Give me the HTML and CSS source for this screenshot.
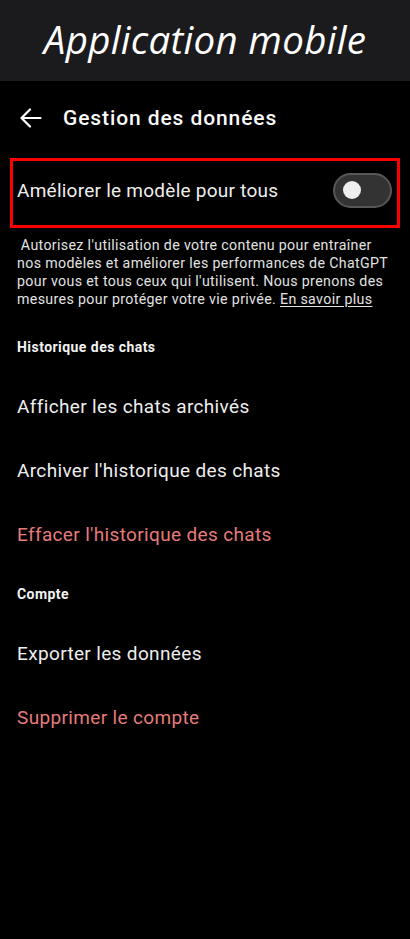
FILE: index.html
```html
<!DOCTYPE html>
<html lang="fr">
<head>
<meta charset="utf-8">
<link rel="stylesheet" href="styles.css">
</head>
<body>
<header class="banner"><h1 class="banner-title">Application mobile</h1></header>
<main class="screen">
  <div class="appbar">
    <svg class="back" width="22" height="20" viewBox="0 0 22 20" fill="none" stroke="#fff" stroke-width="2.2" stroke-linecap="round" stroke-linejoin="round"><path d="M20.5 10H2M10 1.5L1.5 10L10 18.5"/></svg>
    <h2 class="appbar-title">Gestion des données</h2>
  </div>
  <div class="highlight">
    <span class="toggle-label">Améliorer le modèle pour tous</span>
    <span class="switch"><span class="knob"></span></span>
  </div>
  <p class="desc">&nbsp;Autorisez l'utilisation de votre contenu pour entraîner nos modèles et améliorer les performances de ChatGPT pour vous et tous ceux qui l'utilisent. Nous prenons des mesures pour protéger votre vie privée. <u>En savoir plus</u></p>
  <h3 class="section">Historique des chats</h3>
  <div class="item">Afficher les chats archivés</div>
  <div class="item">Archiver l'historique des chats</div>
  <div class="item danger">Effacer l'historique des chats</div>
  <h3 class="section">Compte</h3>
  <div class="item">Exporter les données</div>
  <div class="item danger">Supprimer le compte</div>
</main>
</body>
</html>
```
FILE: styles.css
```css
html, body { margin: 0; padding: 0; background: #000; }
body { width: 410px; height: 939px; overflow: hidden; font-family: Roboto, "Noto Sans", sans-serif; color: #f2f2f2; }
.banner { height: 81px; background: #1b1b1d; display: flex; align-items: center; justify-content: center; }
.banner-title { margin: 0 0 4px 0; font-family: "Open Sans", sans-serif; font-style: italic; font-weight: 400; font-size: 38.5px; color: #fff; letter-spacing: 0.3px; }
.screen { padding: 0 10px 0 10px; }
.appbar { height: 74px; display: flex; align-items: center; padding-left: 10px; }
.back { margin-right: 21px; display: block; }
.appbar-title { margin: 0; font-size: 21px; font-weight: 500; color: #fafafa; letter-spacing: 0.9px; }
.highlight { margin-top: 3px; border: 3px solid #ff0000; display: flex; align-items: center; justify-content: space-between; padding: 0 5px 6px 4px; box-sizing: border-box; height: 70px; }
.toggle-label { font-size: 19px; color: #eee; letter-spacing: 0.25px; }
.switch { height: 31px; border: 2px solid #575757; background: #333; border-radius: 20px; display: flex; align-items: center; padding-left: 8px; box-sizing: content-box; width: 47px; }
.knob { width: 18px; height: 18px; border-radius: 50%; background: #efefef; }
.desc { margin: 8px 11px 0 7px; font-size: 14.2px; line-height: 18px; color: #e2e2e2; letter-spacing: 0.35px; }
.desc u { text-decoration-thickness: 1px; text-underline-offset: 2px; }
.section { margin: 29px 0 0 7px; font-size: 14px; font-weight: 700; color: #f2f2f2; height: 20px; line-height: 20px; letter-spacing: 0.45px; }
.item { margin-left: 7px; height: 64px; line-height: 64px; font-size: 19px; color: #eee; letter-spacing: 0.35px; }
.section + .item { margin-top: 18px; }
.item + .section { margin-top: 17px; }
.danger { color: #e67b7b; }
```
